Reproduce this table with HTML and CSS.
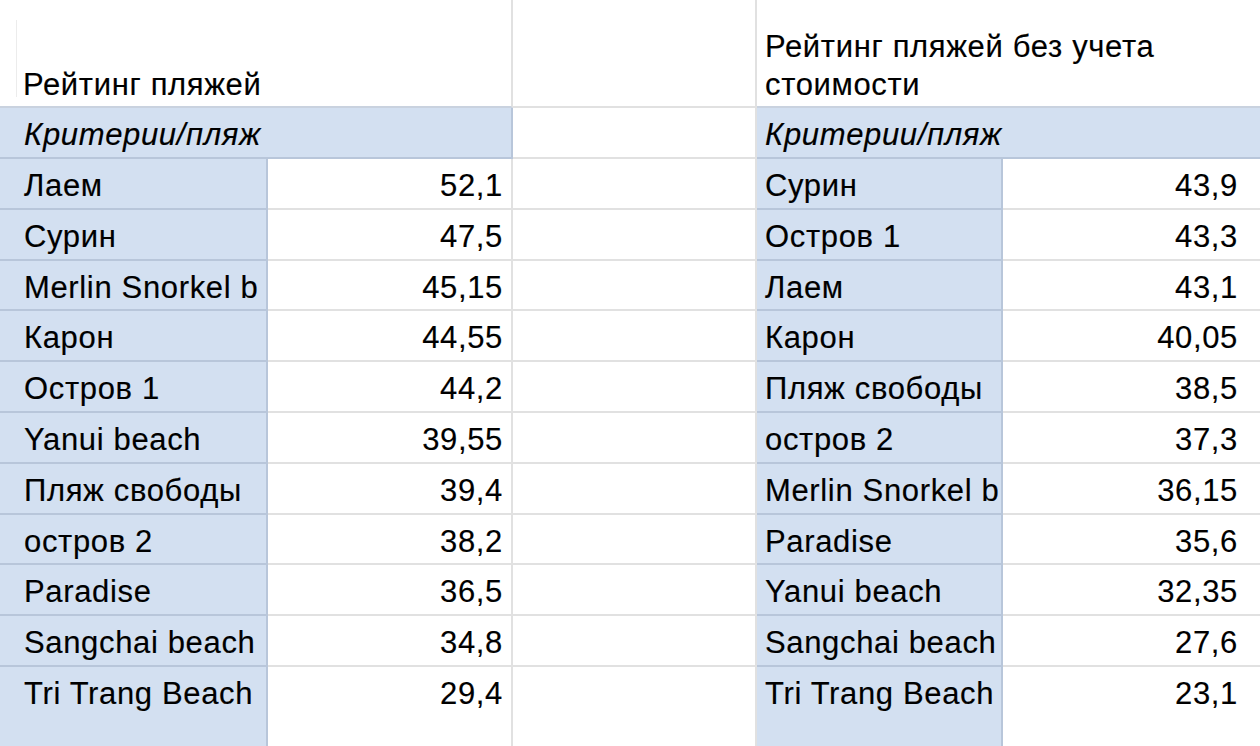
FILE: index.html
```html
<!DOCTYPE html>
<html lang="ru">
<head>
<meta charset="utf-8">
<title>Рейтинг пляжей</title>
<link rel="stylesheet" href="styles.css">
</head>
<body>
<div class="sheet">
  <div class="cell title title-left">Рейтинг пляжей</div>
  <div class="cell blank"></div>
  <div class="cell title title-right">Рейтинг пляжей без учета<br>стоимости</div>

  <div class="cell crit crit-left">Критерии/пляж</div>
  <div class="cell blank"></div>
  <div class="cell crit crit-right">Критерии/пляж</div>

  <div class="cell label left">Лаем</div><div class="cell val left">52,1</div><div class="cell blank"></div><div class="cell label right">Сурин</div><div class="cell val right">43,9</div>
  <div class="cell label left">Сурин</div><div class="cell val left">47,5</div><div class="cell blank"></div><div class="cell label right">Остров 1</div><div class="cell val right">43,3</div>
  <div class="cell label left">Merlin Snorkel b</div><div class="cell val left">45,15</div><div class="cell blank"></div><div class="cell label right">Лаем</div><div class="cell val right">43,1</div>
  <div class="cell label left">Карон</div><div class="cell val left">44,55</div><div class="cell blank"></div><div class="cell label right">Карон</div><div class="cell val right">40,05</div>
  <div class="cell label left">Остров 1</div><div class="cell val left">44,2</div><div class="cell blank"></div><div class="cell label right">Пляж свободы</div><div class="cell val right">38,5</div>
  <div class="cell label left">Yanui beach</div><div class="cell val left">39,55</div><div class="cell blank"></div><div class="cell label right">остров 2</div><div class="cell val right">37,3</div>
  <div class="cell label left">Пляж свободы</div><div class="cell val left">39,4</div><div class="cell blank"></div><div class="cell label right">Merlin Snorkel b</div><div class="cell val right">36,15</div>
  <div class="cell label left">остров 2</div><div class="cell val left">38,2</div><div class="cell blank"></div><div class="cell label right">Paradise</div><div class="cell val right">35,6</div>
  <div class="cell label left">Paradise</div><div class="cell val left">36,5</div><div class="cell blank"></div><div class="cell label right">Yanui beach</div><div class="cell val right">32,35</div>
  <div class="cell label left">Sangchai beach</div><div class="cell val left">34,8</div><div class="cell blank"></div><div class="cell label right">Sangchai beach</div><div class="cell val right">27,6</div>
  <div class="cell label left last">Tri Trang Beach</div><div class="cell val left last">29,4</div><div class="cell blank last"></div><div class="cell label right last">Tri Trang Beach</div><div class="cell val right last">23,1</div>
</div>
</body>
</html>
```

FILE: styles.css
```css
html, body {
  margin: 0;
  padding: 0;
  background: #ffffff;
}

body {
  width: 1260px;
  height: 746px;
  overflow: hidden;
  font-family: "Liberation Sans", Arial, Helvetica, sans-serif;
  color: #000000;
}

.sheet {
  display: grid;
  grid-template-columns: 268px 245px 244px 246px 1fr;
  grid-template-rows: 108px 51px repeat(10, 50.8px) 1fr;
  height: 746px;
  font-size: 31px;
  letter-spacing: 0.65px;
  line-height: 35px;
  -webkit-text-stroke: 0.15px #000000;
}

.cell {
  box-sizing: border-box;
  white-space: nowrap;
  overflow: hidden;
  border-right: 2px solid #e1e1e1;
  border-bottom: 2px solid #e1e1e1;
  padding-top: 9px;
}

.title {
  display: flex;
  flex-direction: column;
  justify-content: flex-end;
  padding-top: 0;
  padding-bottom: 2px;
  line-height: 38px;
  border-bottom-color: #c9d2df;
}

.title-left {
  grid-column: 1 / span 2;
  padding-left: 23px;
  position: relative;
}

.title-left::before {
  content: "";
  position: absolute;
  left: 16px;
  top: 20px;
  bottom: 9px;
  width: 1px;
  background: #ececec;
}

.title-right {
  grid-column: 4 / span 2;
  padding-left: 8px;
  border-right: none;
}

.crit {
  background: #d3e0f1;
  font-style: italic;
  border-right-color: #b8c6da;
  border-bottom-color: #b8c6da;
}

.crit-left {
  grid-column: 1 / span 2;
  padding-left: 24px;
}

.crit-right {
  grid-column: 4 / span 2;
  padding-left: 8px;
  border-right: none;
}

.label {
  background: #d3e0f1;
  border-right-color: #b8c6da;
  border-bottom-color: #b8c6da;
}

.label.left {
  padding-left: 24px;
}

.label.right {
  padding-left: 8px;
}

.val {
  text-align: right;
}

.val.left {
  padding-right: 8px;
}

.val.right {
  padding-right: 22px;
  border-right: none;
}

.last {
  border-bottom: none;
}
```
